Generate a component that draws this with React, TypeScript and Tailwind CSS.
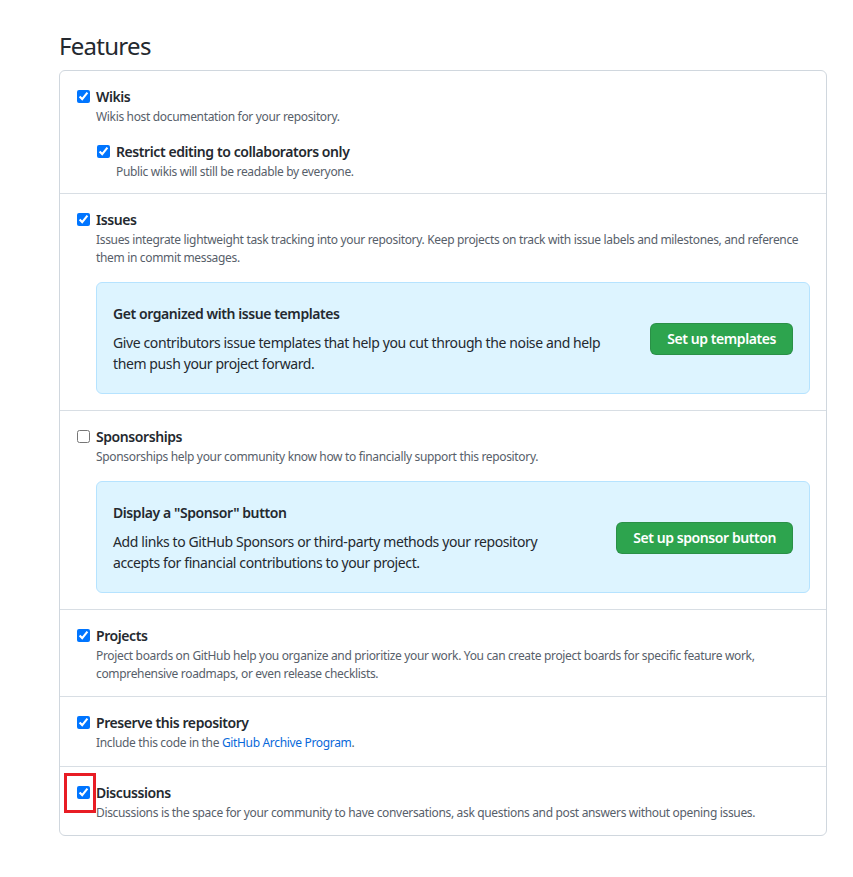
import React from 'react';

const font = { fontFamily: '"Noto Sans", "Open Sans", sans-serif' };

type RowProps = {
  checked?: boolean;
  label: string;
  children?: React.ReactNode;
};

const CheckRow = ({ checked = true, label, children }: RowProps) => (
  <div className="flex items-start gap-[6px]">
    <input
      type="checkbox"
      defaultChecked={checked}
      className="m-0 mt-[4px] h-[13px] w-[13px] shrink-0 accent-[#0075ff]"
    />
    <div className="min-w-0 flex-1">
      <div className="text-[14px] font-semibold leading-[21px] tracking-[-0.03em] text-[#24292f]">{label}</div>
      {children}
    </div>
  </div>
);

const Note = ({ children }: { children: React.ReactNode }) => (
  <p className="mt-px text-[12px] leading-[18px] tracking-[-0.028em] text-[#57606a]">{children}</p>
);

const Callout = ({ title, body, action }: { title: string; body: React.ReactNode; action: string }) => (
  <div className="mt-[15px] flex items-center justify-between rounded-[6px] border border-[#b6e3ff] bg-[#ddf4ff] px-4 pb-[19px] pt-[20px]">
    <div>
      <div className="text-[14px] font-semibold leading-[21px] tracking-[-0.03em] text-[#24292f]">{title}</div>
      <p className="mt-[8px] text-[14px] leading-[21px] tracking-[-0.028em] text-[#24292f]">{body}</p>
    </div>
    <button className="h-[32px] shrink-0 rounded-[6px] border border-[#1b1f2426] bg-[#2da44e] px-4 text-[14px] font-semibold tracking-[-0.03em] text-white">
      {action}
    </button>
  </div>
);

export default function App() {
  return (
    <div className="min-h-screen bg-white pl-[59px] pt-[30px]" style={font}>
      <h2 className="text-[24px] font-normal leading-[32px] tracking-[-0.03em] text-[#24292f]">Features</h2>
      <div className="mt-[8px] w-[768px] rounded-[6px] border border-[#d0d7de]">
        <div className="border-b border-[#d8dee4] pb-[12px] pl-[17px] pr-4 pt-[15px]">
          <CheckRow label="Wikis">
            <Note>Wikis host documentation for your repository.</Note>
            <div className="mt-[15px] pl-px">
              <CheckRow label="Restrict editing to collaborators only">
                <Note>Public wikis will still be readable by everyone.</Note>
              </CheckRow>
            </div>
          </CheckRow>
        </div>

        <div className="border-b border-[#d8dee4] pb-[16px] pl-[17px] pr-4 pt-[15px]">
          <CheckRow label="Issues">
            <Note>
              Issues integrate lightweight task tracking into your repository. Keep projects on track with issue labels
              and milestones, and reference them in commit messages.
            </Note>
            <Callout
              title="Get organized with issue templates"
              body={
                <>
                  Give contributors issue templates that help you cut through the noise and help
                  <br />
                  them push your project forward.
                </>
              }
              action="Set up templates"
            />
          </CheckRow>
        </div>

        <div className="border-b border-[#d8dee4] pb-[16px] pl-[17px] pr-4 pt-[15px]">
          <CheckRow checked={false} label="Sponsorships">
            <Note>Sponsorships help your community know how to financially support this repository.</Note>
            <Callout
              title={'Display a "Sponsor" button'}
              body={
                <>
                  Add links to GitHub Sponsors or third-party methods your repository
                  <br />
                  accepts for financial contributions to your project.
                </>
              }
              action="Set up sponsor button"
            />
          </CheckRow>
        </div>

        <div className="border-b border-[#d8dee4] pb-[13px] pl-[17px] pr-4 pt-[15px]">
          <CheckRow label="Projects">
            <Note>
              Project boards on GitHub help you organize and prioritize your work. You can create project boards for
              specific feature work, comprehensive roadmaps, or even release checklists.
            </Note>
          </CheckRow>
        </div>

        <div className="border-b border-[#d8dee4] pb-[14px] pl-[17px] pr-4 pt-[15px]">
          <CheckRow label="Preserve this repository">
            <Note>
              Include this code in the{' '}
              <a href="#" className="text-[#0969da]">
                GitHub Archive Program
              </a>
              .
            </Note>
          </CheckRow>
        </div>

        <div className="relative pb-[13px] pl-[17px] pr-4 pt-[15px]">
          <CheckRow label="Discussions">
            <Note>
              Discussions is the space for your community to have conversations, ask questions and post answers without
              opening issues.
            </Note>
          </CheckRow>
          <div className="pointer-events-none absolute left-[4px] top-[6px] h-[40px] w-[32px] border-[3px] border-[#e81c24]" />
        </div>
      </div>
    </div>
  );
}
